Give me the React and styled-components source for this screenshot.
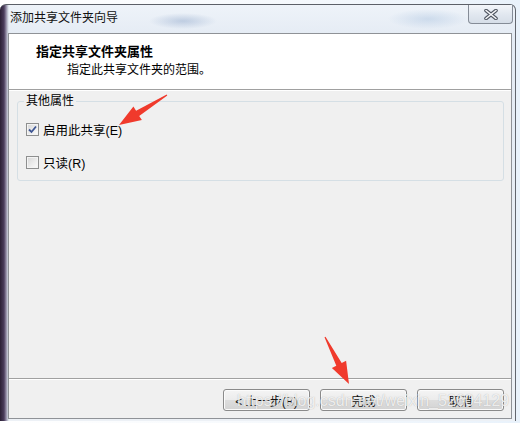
import React from 'react'
import styled, {createGlobalStyle} from 'styled-components'

const GlobalStyle = createGlobalStyle`
  html, body {
    margin: 0;
    padding: 0;
    background: #ffffff;
  }
  body {
    font-family: "Liberation Sans", "Noto Sans CJK SC", sans-serif;
    font-size: 12px;
    color: #000;
  }
`

const Screen = styled.div`
  position: relative;
  width: 520px;
  height: 423px;
  padding-top: 4px;
  box-sizing: border-box;
  overflow: hidden;
  background: linear-gradient(90deg, #ffffff 0, #f4f8fc 60%, #e9f2fb 100%);
`

const Window = styled.div`
  display: flex;
  flex-direction: column;
  width: 516px;
  height: 417px;
  box-sizing: border-box;
  padding: 0 3px 2px 8px;
  border-top: 1px solid #5c6068;
  border-right: 1px solid #62666e;
  border-radius: 6px 6px 0 0;
  background:
    linear-gradient(90deg, #2a1f34 0, #4b3d5c 4px, #8e86a0 6px, #cfd6e0 8px, transparent 9px),
    linear-gradient(180deg, #eef3f9 0, #e4ebf4 8%, #edf1f6 100%);
`

const TitleBar = styled.div`
  display: flex;
  align-items: flex-start;
  justify-content: space-between;
  height: 28px;
  background:
    radial-gradient(ellipse 34px 8px at 175px 16px, rgba(110, 140, 185, 0.35), transparent),
    radial-gradient(ellipse 40px 10px at 420px 14px, rgba(150, 180, 215, 0.35), transparent);
`

const Title = styled.div`
  padding: 5px 0 0 2px;
  line-height: 16px;
  font-size: 12px;
  color: #111;
`

const CloseButton = styled.div`
  display: flex;
  align-items: center;
  justify-content: center;
  width: 45px;
  height: 19px;
  margin-right: -1px;
  box-sizing: border-box;
  border: 1px solid #858c97;
  border-top: none;
  border-radius: 0 0 4px 4px;
  background: linear-gradient(180deg, #f3f6fa 0, #e2e8f0 50%, #d6dee8 100%);
`

const Client = styled.div`
  flex: 1;
  display: flex;
  flex-direction: column;
  border: 1px solid #8f9297;
  background: #f0f0f0;
`

const Header = styled.div`
  height: 56px;
  box-sizing: border-box;
  padding: 9px 0 0 27px;
  background: #ffffff;
  border-bottom: 1px solid #a0a0a0;
  box-shadow: 0 1px 0 #ffffff;
`

const HeaderTitle = styled.div`
  font-size: 13px;
  font-weight: bold;
  line-height: 18px;
`

const HeaderSub = styled.div`
  margin-left: 31px;
  font-size: 12px;
  line-height: 18px;
`

const Body = styled.div`
  flex: 1;
  padding: 3px 7px 0 8px;
`

const Group = styled.fieldset`
  margin: 0;
  padding: 10px 8px 8px 8px;
  border: 1px solid #d5dfe5;
  border-radius: 3px;
`

const Legend = styled.legend`
  margin-left: -2px;
  padding: 0 2px;
  line-height: 16px;
  font-size: 12px;
`

const Row = styled.label`
  display: flex;
  align-items: center;
  gap: 4px;
  height: 20px;
  font-size: 12.5px;
  & + & {
    margin-top: 13px;
  }
`

const Box = styled.span`
  display: flex;
  align-items: center;
  justify-content: center;
  width: 13px;
  height: 13px;
  box-sizing: border-box;
  border: 1px solid #8e8f8f;
  background: linear-gradient(135deg, #d6d6d6 0, #eeeeee 60%, #fbfbfb 100%);
  box-shadow: inset 0 0 0 1px #f4f4f4;
`

const Footer = styled.div`
  display: flex;
  justify-content: flex-end;
  gap: 10px;
  height: 40px;
  box-sizing: border-box;
  padding: 10px 7px 0 0;
  border-top: 1px solid #a0a0a0;
  box-shadow: inset 0 1px 0 #ffffff;
`

const Button = styled.div`
  display: flex;
  align-items: center;
  justify-content: center;
  width: 87px;
  height: 22px;
  box-sizing: border-box;
  border: 1px solid #8a8a8a;
  border-radius: 3px;
  background: linear-gradient(180deg, #f4f4f4 0, #ececec 48%, #dddddd 52%, #d3d3d3 100%);
  box-shadow: inset 0 0 0 1px #fbfbfb;
  font-size: 12px;
  color: #111;
`

const Overlay = styled.svg`
  position: absolute;
  left: 0;
  top: 0;
  pointer-events: none;
`

const Watermark = styled.div`
  position: absolute;
  left: 237px;
  top: 392px;
  font-family: "Liberation Sans", sans-serif;
  font-size: 16px;
  line-height: 18px;
  color: rgba(255, 255, 255, 0.8);
  text-shadow: 0 0 1px rgba(120, 120, 120, 0.55);
  white-space: nowrap;
  pointer-events: none;
`

function arrowPoints(tail, tip, headLen = 22, headHalf = 8, shaftHalf = 3) {
    const dx = tip[0] - tail[0]
    const dy = tip[1] - tail[1]
    const len = Math.hypot(dx, dy)
    const ux = dx / len, uy = dy / len
    const nx = -uy, ny = ux
    const bx = tip[0] - ux * headLen, by = tip[1] - uy * headLen
    const pts = [
        [tail[0] + nx * 0.6, tail[1] + ny * 0.6],
        [bx + nx * shaftHalf, by + ny * shaftHalf],
        [bx + nx * headHalf, by + ny * headHalf],
        tip,
        [bx - nx * headHalf, by - ny * headHalf],
        [bx - nx * shaftHalf, by - ny * shaftHalf],
        [tail[0] - nx * 0.6, tail[1] - ny * 0.6],
    ]
    return pts.map(p => p.map(v => v.toFixed(1)).join(',')).join(' ')
}

function CheckBox({checked}) {
    return (
        <Box>
            {checked && (
                <svg width="9" height="9" viewBox="0 0 9 9">
                    <path d="M1 4.5 L3.5 7 L8 1.5" fill="none" stroke="#3d5593" strokeWidth="1.8"/>
                </svg>
            )}
        </Box>
    )
}

export default function App() {
    return (
        <>
            <GlobalStyle/>
            <Screen>
                <Window>
                    <TitleBar>
                        <Title>添加共享文件夹向导</Title>
                        <CloseButton>
                            <svg width="14" height="11" viewBox="0 0 14 11">
                                <path d="M2 1.5 L12 9.5 M12 1.5 L2 9.5" stroke="#4f5560" strokeWidth="3.6" strokeLinecap="round"/>
                                <path d="M2 1.5 L12 9.5 M12 1.5 L2 9.5" stroke="#f7f8fa" strokeWidth="1.6" strokeLinecap="round"/>
                            </svg>
                        </CloseButton>
                    </TitleBar>
                    <Client>
                        <Header>
                            <HeaderTitle>指定共享文件夹属性</HeaderTitle>
                            <HeaderSub>指定此共享文件夹的范围。</HeaderSub>
                        </Header>
                        <Body>
                            <Group>
                                <Legend>其他属性</Legend>
                                <Row><CheckBox checked/>启用此共享(E)</Row>
                                <Row><CheckBox/>只读(R)</Row>
                            </Group>
                        </Body>
                        <Footer>
                            <Button>&lt; 上一步(B)</Button>
                            <Button>完成</Button>
                            <Button>取消</Button>
                        </Footer>
                    </Client>
                </Window>
                <Watermark>https://blog.csdn.net/weixin_52604129</Watermark>
                <Overlay width="520" height="423" viewBox="0 0 520 423">
                    <polygon points={arrowPoints([167, 95], [119, 125])} fill="#f03a2c"/>
                    <polygon points={arrowPoints([325, 337], [349, 384])} fill="#f03a2c"/>
                </Overlay>
            </Screen>
        </>
    )
}
